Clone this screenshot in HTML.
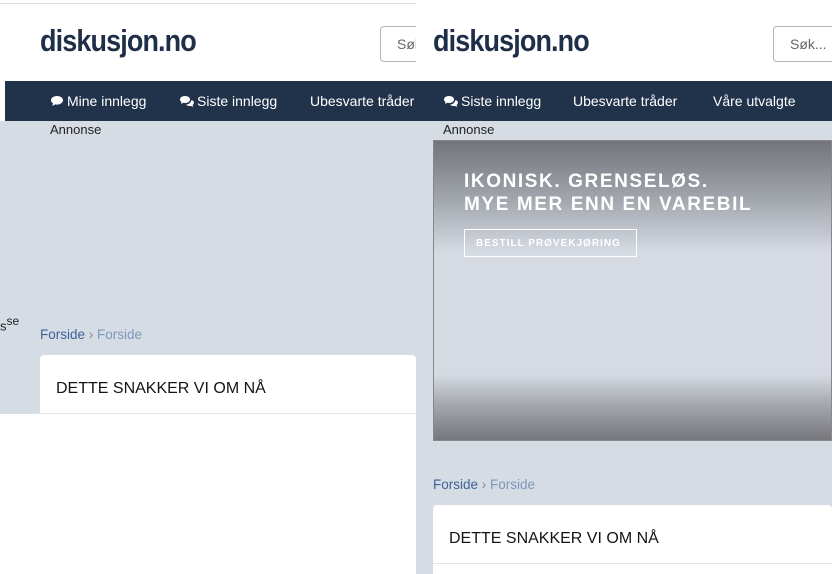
<!DOCTYPE html>
<html><head><meta charset="utf-8"><style>
*{margin:0;padding:0;box-sizing:border-box}
body{width:832px;height:574px;overflow:hidden;position:relative;background:#fff;font-family:"Liberation Sans",sans-serif}
.a{position:absolute}
.logo{font-weight:bold;font-size:31px;color:#1f2f49;letter-spacing:-1px;transform:scaleX(0.87);transform-origin:0 0}
.nav{color:#fff;font-size:14px;top:93px;white-space:nowrap}
.nav svg{vertical-align:-1px;margin-right:3px}
.srch{border:1px solid #b5b5b5;border-radius:4px;height:36px;font-size:14px;color:#666;padding:9px 0 0 16px;top:26px}
.bc{font-size:13.5px;color:#3f629a}
.card{background:#fff;border-radius:4px 4px 0 0}
.ct{font-size:16px;color:#141414;position:absolute;left:16px;top:25px}
</style></head><body>
<div class="a" style="left:0;top:3px;width:427px;height:1px;background:#dedede"></div>
<!-- left panel -->
<div class="a logo" style="left:40px;top:23px">diskusjon.no</div>
<div class="a srch" style="left:380px;width:60px;">Søk</div>
<div class="a" style="left:0;top:81px;width:832px;height:40px;background:#21324b"></div>
<div class="a" style="left:0;top:81px;width:5px;height:40px;background:#fff"></div>
<div class="a" style="left:0;top:121px;width:416px;height:293px;background:#d6dce4"></div>
<div class="a nav" style="left:50px"><svg width="14" height="12" viewBox="0 0 14 12"><path d="M7 1C3.5 1 1 3 1 5.3c0 1.3.8 2.4 2 3.1L2.3 11 5.3 9.4c.5.1 1.1.2 1.7.2 3.5 0 6-2 6-4.3S10.5 1 7 1z" fill="#fff"/></svg>Mine innlegg</div>
<div class="a nav" style="left:179px"><svg width="15" height="12" viewBox="0 0 15 12"><path d="M6 1C3 1 1 2.6 1 4.5c0 1 .6 1.9 1.5 2.5L2 9l2.3-1.2c.5.1 1.1.2 1.7.2 3 0 5-1.6 5-3.5S9 1 6 1z" fill="#fff"/><path d="M12 5.5c0 2.3-2.4 4-5 4.1.8.9 2.2 1.4 3.6 1.4.4 0 .8 0 1.1-.1L14 12l-.5-2c.9-.6 1.4-1.4 1.4-2.3 0-.9-.5-1.7-1.4-2.3z" fill="#fff"/></svg>Siste innlegg</div>
<div class="a nav" style="left:310px">Ubesvarte tråder</div>
<div class="a" style="left:50px;top:122px;font-size:13px;color:#222">Annonse</div>
<div class="a" style="left:0;top:314px;font-size:13px;color:#222">s<sup style="font-size:12px">se</sup></div>
<div class="a bc" style="left:40px;top:327px">Forside <span style="color:#888">›</span> <span style="color:#7d97bd">Forside</span></div>
<div class="a card" style="left:40px;top:355px;width:376px;height:58px"><div class="ct">DETTE SNAKKER VI OM NÅ</div></div>
<div class="a" style="left:34px;top:413px;width:382px;height:1px;background:#e4e4e4"></div>
<!-- right panel -->
<div class="a" style="left:416px;top:0;width:416px;height:81px;background:#fff"></div>
<div class="a srch" style="left:773px;width:70px;">Søk...</div>
<div class="a logo" style="left:433px;top:23px">diskusjon.no</div>
<div class="a" style="left:416px;top:121px;width:416px;height:453px;background:#d6dce4"></div>
<div class="a nav" style="left:443px;background:#21324b;padding-right:20px"><svg width="15" height="12" viewBox="0 0 15 12"><path d="M6 1C3 1 1 2.6 1 4.5c0 1 .6 1.9 1.5 2.5L2 9l2.3-1.2c.5.1 1.1.2 1.7.2 3 0 5-1.6 5-3.5S9 1 6 1z" fill="#fff"/><path d="M12 5.5c0 2.3-2.4 4-5 4.1.8.9 2.2 1.4 3.6 1.4.4 0 .8 0 1.1-.1L14 12l-.5-2c.9-.6 1.4-1.4 1.4-2.3 0-.9-.5-1.7-1.4-2.3z" fill="#fff"/></svg>Siste innlegg</div>
<div class="a nav" style="left:573px">Ubesvarte tråder</div>
<div class="a nav" style="left:713px">Våre utvalgte</div>
<div class="a" style="left:443px;top:122px;font-size:13px;color:#222">Annonse</div>
<div class="a" style="left:433px;top:140px;width:399px;height:301px;border:1px solid #888;background:linear-gradient(#71747b 0%,#a3a7ae 20%,#d5dae3 37%,#d6dbe3 78%,#a5a8ae 88%,#76777c 100%)"></div>
<div class="a" style="left:464px;top:170px;color:#fff;font-weight:bold;font-size:19px;letter-spacing:1.6px;line-height:23px">IKONISK. GRENSELØS.<br>MYE MER ENN EN VAREBIL</div>
<div class="a" style="left:464px;top:229px;width:173px;height:28px;border:1px solid #fff;color:#fff;font-weight:bold;font-size:10px;letter-spacing:1px;padding:8px 0 0 11px">BESTILL PRØVEKJØRING</div>
<div class="a bc" style="left:433px;top:477px">Forside <span style="color:#888">›</span> <span style="color:#7d97bd">Forside</span></div>
<div class="a card" style="left:433px;top:505px;width:399px;height:69px"><div class="ct">DETTE SNAKKER VI OM NÅ</div></div>
<div class="a" style="left:433px;top:563px;width:399px;height:1px;background:#e4e4e4"></div>
</body></html>
